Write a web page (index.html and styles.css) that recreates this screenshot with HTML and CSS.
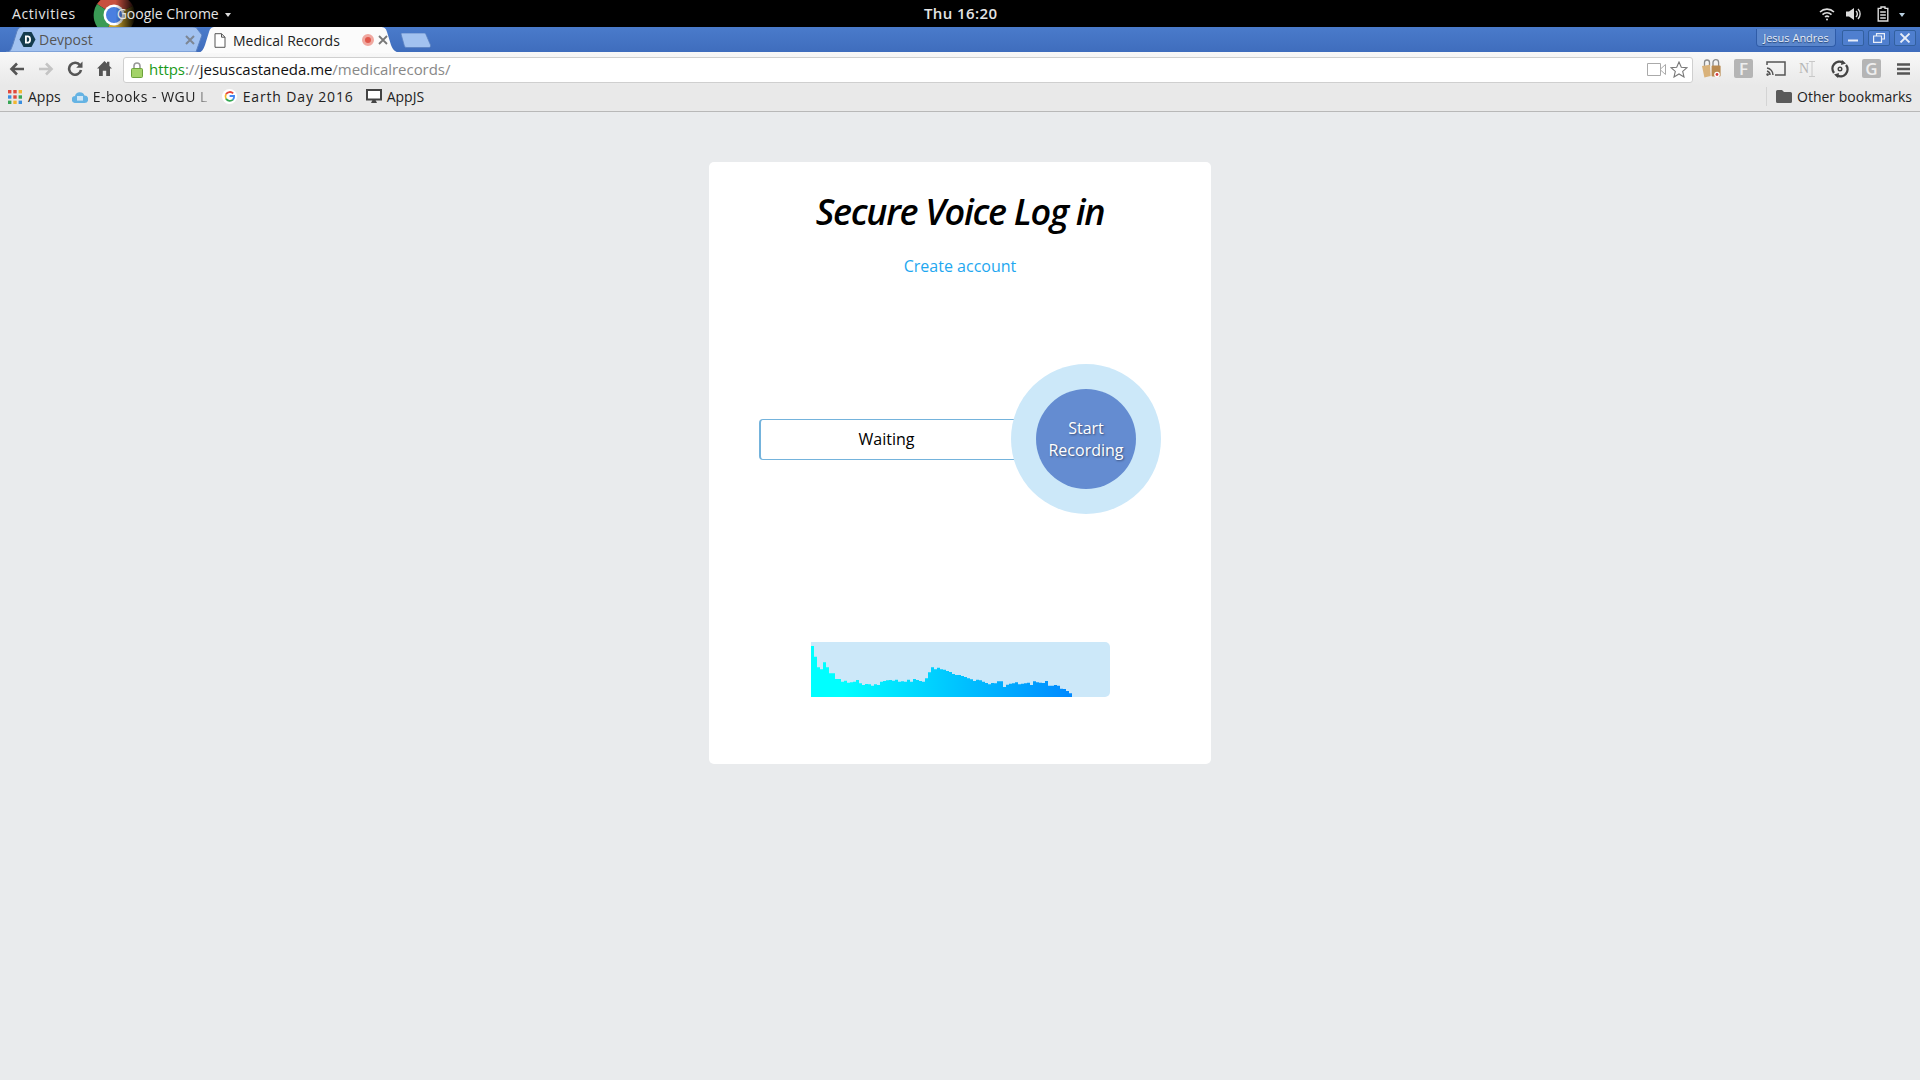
FILE: index.html
```html
<!DOCTYPE html>
<html lang="en">
    <head>
        <title>Medical Records</title>
        <meta charset="utf-8" />
        <link rel="stylesheet" href="styles.css">
    </head>
    <body>
        <div id="topbar">
            <span class="activities">Activities</span>
            <div class="appmenu">
                <svg class="chrome" width="50" height="27" viewBox="0 0 50 27">
                    <defs>
                        <linearGradient id="fade" x1="0" x2="1" y1="0" y2="0">
                            <stop offset="0.45" stop-color="#000" stop-opacity="0" />
                            <stop offset="0.85" stop-color="#000" />
                        </linearGradient>
                    </defs>
                    <path d="M21 15 L4 4 A21 21 0 0 1 40 6 Z" fill="#c8503f" />
                    <path d="M21 15 L4 4 A21 21 0 0 0 12 34 Z" fill="#3a9a55" />
                    <path d="M21 15 L40 6 A21 21 0 0 1 12 34 Z" fill="#c9a22a" />
                    <circle cx="21" cy="15" r="10.5" fill="#fff" />
                    <circle cx="21" cy="15" r="8" fill="#4a7fe0" />
                    <rect width="50" height="27" fill="url(#fade)" />
                </svg>
                <span class="appname">Google Chrome</span>
                <span class="caret"></span>
            </div>
            <span class="clock">Thu 16:20</span>
            <div class="status">
                <svg width="16" height="14" viewBox="0 0 16 14" fill="none" stroke="#ddd" stroke-width="1.6">
                    <path d="M1 5 A10 10 0 0 1 15 5" />
                    <path d="M3.5 7.6 A6.5 6.5 0 0 1 12.5 7.6" />
                    <path d="M6 10 A3 3 0 0 1 10 10" />
                    <circle cx="8" cy="12.4" r="1" fill="#ddd" stroke="none" />
                </svg>
                <svg class="speaker" width="16" height="14" viewBox="0 0 16 14" fill="#ddd">
                    <path d="M0 4.5 H3 L8 1 V13 L3 9.5 H0 Z" />
                    <path d="M10 4 A4 4 0 0 1 10 10 M12 2 A7 7 0 0 1 12 12" fill="none" stroke="#ddd" stroke-width="1.4" />
                </svg>
                <svg class="battery" width="12" height="16" viewBox="0 0 12 16" fill="none" stroke="#ddd" stroke-width="1.4">
                    <path d="M4 1 H8 V2.4 H10.8 V15 H1.2 V2.4 H4 Z" />
                    <path d="M3.2 6 H8.8 M3.2 9 H8.8 M3.2 12 H8.8" />
                </svg>
                <span class="caret small"></span>
            </div>
        </div>
        <div id="tabstrip">
            <div class="tab idle">
                <svg class="tabshape" width="196" height="25" viewBox="0 0 196 25">
                    <path d="M0 25 C5 25 5 22 7 17 L11 4 C12 1 14 0 16 0 H187 C190 0 191 1 192 3 L196 8 L190 25 Z" fill="#a2c2f0" stroke="#5c82c0" />
                </svg>
                <svg class="favicon" width="17" height="17" viewBox="0 0 17 17">
                    <path d="M4.5 1 H12.5 L16.5 8.5 L12.5 16 H4.5 L.5 8.5 Z" fill="#143b4d" />
                    <path d="M6 4.5 H9 C11.4 4.5 12 6.8 12 8.5 C12 10.2 11.4 12.5 9 12.5 H6 Z M7.8 6.2 V10.8 H8.8 C9.9 10.8 10.2 9.6 10.2 8.5 C10.2 7.4 9.9 6.2 8.8 6.2 Z" fill="#fff" fill-rule="evenodd" />
                </svg>
                <span class="tabtitle">Devpost</span>
                <svg class="tabclose" width="10" height="10" viewBox="0 0 10 10">
                    <path d="M1 1 L9 9 M9 1 L1 9" stroke="#7d8694" stroke-width="2" />
                </svg>
            </div>
            <div class="tab active">
                <svg class="tabshape" width="202" height="26" viewBox="0 0 202 26">
                    <path d="M0 26 C4 25 5 23 7 18 L11 5 C12 1 14 0 17 0 H182 C186 0 188 1 189 5 L193 18 C195 23 197 25 202 26 Z" fill="#fbfbfb" />
                </svg>
                <svg class="favicon page" width="12" height="15" viewBox="0 0 12 15">
                    <path d="M1 .7 H7.5 L11 4.2 V14.3 H1 Z M7.5 .7 V4.2 H11" fill="#fff" stroke="#555" stroke-width="1" />
                </svg>
                <span class="tabtitle">Medical Records</span>
                <span class="recdot"></span>
                <svg class="tabclose" width="10" height="10" viewBox="0 0 10 10">
                    <path d="M1 1 L9 9 M9 1 L1 9" stroke="#777" stroke-width="1.8" />
                </svg>
            </div>
            <svg class="newtab" width="31" height="15" viewBox="0 0 31 15">
                <path d="M1 1 C1 .5 1.5 0 2 0 H24 C25 0 25.6 .5 26 1.5 L30.5 12 C31 13.5 30 14.5 29 14.5 H7 C5.5 14.5 4.8 14 4.4 13 Z" fill="#a2c2f0" stroke="#5c82c0" stroke-width=".8" />
            </svg>
            <div class="winbuttons">
                <span class="profile">Jesus Andres</span>
                <span class="winbtn">
                    <svg width="12" height="10" viewBox="0 0 12 10"><path d="M1 7.5 H11" stroke="#e8eef8" stroke-width="2" /></svg>
                </span>
                <span class="winbtn">
                    <svg width="12" height="10" viewBox="0 0 12 10" fill="none" stroke="#e8eef8" stroke-width="1.2"><path d="M3.5 2.5 V.6 H11.4 V6 H8.5 M.6 3 H8.5 V9.4 H.6 Z" /></svg>
                </span>
                <span class="winbtn">
                    <svg width="12" height="10" viewBox="0 0 12 10"><path d="M1.5 .5 L10.5 9.5 M10.5 .5 L1.5 9.5" stroke="#e8eef8" stroke-width="1.8" /></svg>
                </span>
            </div>
        </div>
        <div id="toolbar">
            <svg class="navicon back" width="16" height="14" viewBox="0 0 16 14">
                <path d="M15 7 H3 M8 1.5 L2.5 7 L8 12.5" fill="none" stroke="#555" stroke-width="2.6" />
            </svg>
            <svg class="navicon forward" width="16" height="14" viewBox="0 0 16 14">
                <path d="M1 7 H13 M8 1.5 L13.5 7 L8 12.5" fill="none" stroke="#c4c4c4" stroke-width="2.6" />
            </svg>
            <svg class="navicon reload" width="16" height="15" viewBox="0 0 16 15">
                <path d="M13 4.2 A6 6 0 1 0 14 9" fill="none" stroke="#555" stroke-width="2.6" />
                <path d="M15.5 .5 V6.8 H9.2 Z" fill="#555" />
            </svg>
            <svg class="navicon home" width="15" height="15" viewBox="0 0 15 15">
                <path d="M7.5 0 L10 2.5 V.8 H12.4 V5 L15 7.5 H13 V15 H9.2 V9.8 H5.8 V15 H2 V7.5 H0 Z" fill="#555" />
            </svg>
            <div class="omnibox">
                <svg class="lock" width="12" height="16" viewBox="0 0 12 16">
                    <path d="M3 7 V4 A3 3 0 0 1 9 4 V7" fill="none" stroke="#999" stroke-width="1.6" />
                    <rect x=".5" y="6.5" width="11" height="9" rx="1" fill="#a3d368" stroke="#6da23c" />
                </svg>
                <span class="url"><span class="scheme">https</span><span class="dim">://</span>jesuscastaneda.me<span class="dim">/medicalrecords/</span></span>
                <svg class="camera" width="19" height="13" viewBox="0 0 19 13" fill="none" stroke="#aaa" stroke-width="1">
                    <path d="M.5 .5 H13.5 V12.5 H.5 Z M13.5 6 L18.5 1.5 V11.5 L13.5 7" />
                </svg>
                <svg class="star" width="18" height="17" viewBox="0 0 18 17">
                    <path d="M9 1 L11.3 6.2 L17 6.7 L12.7 10.4 L14 16 L9 13 L4 16 L5.3 10.4 L1 6.7 L6.7 6.2 Z" fill="#fff" stroke="#777" stroke-width="1.1" />
                </svg>
            </div>
            <div class="extensions">
                <svg width="19" height="19" viewBox="0 0 19 19">
                    <path d="M2.5 7 V3.5 A2.5 2.5 0 0 1 7.5 3.5 V7 M11 7 V3.5 A2.8 2.8 0 0 1 16.6 3.5 V7" fill="none" stroke="#8a8a8a" stroke-width="1.3" />
                    <path d="M0 7 L8 5.8 L8.6 17 L2.4 18.4 Z" fill="#d9b27a" />
                    <rect x="9.6" y="6.6" width="9" height="10.8" rx="1" fill="#b98a50" />
                    <circle cx="15" cy="15.5" r="2.8" fill="#fff" />
                    <circle cx="15" cy="15.5" r="1.4" fill="#d43c3c" />
                </svg>
                <span class="extbox">F</span>
                <svg width="20" height="16" viewBox="0 0 20 16" fill="none" stroke="#555" stroke-width="1.5">
                    <path d="M1 4 V1 H19 V14 H9" />
                    <path d="M1 7 A7 7 0 0 1 7 14 M1 10 A4 4 0 0 1 4 14" />
                    <circle cx="1.6" cy="13.6" r="1.3" fill="#555" stroke="none" />
                </svg>
                <span class="extnote">N<svg width="6" height="16" viewBox="0 0 6 16" fill="none" stroke="#c8c8c8"><path d="M0 .5 H6 M3 .5 V15.5 M0 15.5 H6" /></svg></span>
                <svg width="18" height="18" viewBox="0 0 18 18" fill="none" stroke="#444" stroke-width="2.4">
                    <path d="M3 13 A7 7 0 0 1 12 2.6" />
                    <path d="M15 5 A7 7 0 0 1 6 15.4" />
                    <circle cx="9" cy="9" r="1.8" stroke-width="1.4" />
                    <path d="M11 0 L15 3.4 L10 5 Z M7 18 L3 14.6 L8 13 Z" fill="#444" stroke="none" />
                </svg>
                <span class="extbox">G</span>
                <svg class="menuicon" width="13" height="12" viewBox="0 0 13 12">
                    <path d="M0 1.5 H13 M0 6 H13 M0 10.5 H13" stroke="#555" stroke-width="2.4" />
                </svg>
            </div>
        </div>
        <div id="bookmarks">
            <svg class="appsicon" width="14" height="14" viewBox="0 0 14 14">
                <rect width="3.4" height="3.4" fill="#e0483c" /><rect x="5.3" width="3.4" height="3.4" fill="#e0483c" /><rect x="10.6" width="3.4" height="3.4" fill="#f2b632" />
                <rect y="5.3" width="3.4" height="3.4" fill="#3a8fe0" /><rect x="5.3" y="5.3" width="3.4" height="3.4" fill="#e0483c" /><rect x="10.6" y="5.3" width="3.4" height="3.4" fill="#38a655" />
                <rect y="10.6" width="3.4" height="3.4" fill="#38a655" /><rect x="5.3" y="10.6" width="3.4" height="3.4" fill="#f2b632" /><rect x="10.6" y="10.6" width="3.4" height="3.4" fill="#3a8fe0" />
            </svg>
            <span class="mark apps">Apps</span>
            <svg class="cloud" width="16" height="12" viewBox="0 0 16 12">
                <path d="M3.5 12 A3.5 3.5 0 0 1 3 5 A5 5 0 0 1 12.5 4.6 A3.7 3.7 0 0 1 12.5 12 Z" fill="#65b3e3" />
                <rect x="5" y="5" width="6" height="4.6" fill="#cfe6f6" />
            </svg>
            <span class="mark ebooks">E-books - WGU L</span>
            <svg class="gicon" width="15" height="15" viewBox="0 0 15 15">
                <circle cx="7.5" cy="7.5" r="7.5" fill="#fff" />
                <path d="M11.2 4.3 A4.7 4.7 0 0 0 4 5.2" fill="none" stroke="#e5453a" stroke-width="1.8" />
                <path d="M4 5.2 A4.7 4.7 0 0 0 4 9.8" fill="none" stroke="#f4b72b" stroke-width="1.8" />
                <path d="M4 9.8 A4.7 4.7 0 0 0 11 10.6" fill="none" stroke="#35a853" stroke-width="1.8" />
                <path d="M11 10.6 A4.7 4.7 0 0 0 12.1 7 H7.6" fill="none" stroke="#4385f4" stroke-width="1.8" />
            </svg>
            <span class="mark earth">Earth Day 2016</span>
            <svg class="monitor" width="16" height="15" viewBox="0 0 16 15">
                <path d="M1 1 H15 V10.5 H1 Z" fill="#fff" stroke="#444" stroke-width="2" />
                <path d="M5 14 H11 L9.5 11 H6.5 Z" fill="#444" />
            </svg>
            <span class="mark">AppJS</span>
            <div class="otherbm">
                <svg width="16" height="13" viewBox="0 0 16 13">
                    <path d="M0 1.5 A1.5 1.5 0 0 1 1.5 0 H6 L8 2 H14.5 A1.5 1.5 0 0 1 16 3.5 V11.5 A1.5 1.5 0 0 1 14.5 13 H1.5 A1.5 1.5 0 0 1 0 11.5 Z" fill="#5a5a5a" />
                </svg>
                <span class="mark">Other bookmarks</span>
            </div>
        </div>
        <div id="page">
            <div class="card">
                <h1>Secure Voice Log in</h1>
                <a class="create" href="#">Create account</a>
                <div class="recorder">
                    <div class="status-box">Waiting</div>
                    <div class="ring">
                        <button class="record" type="button">Start Recording</button>
                    </div>
                </div>
                <div class="wave">
                    <svg width="300" height="55" viewBox="0 0 300 55">
                        <defs>
                            <linearGradient id="wavefill" x1="0" x2="262" y1="0" y2="0" gradientUnits="userSpaceOnUse">
                                <stop offset="0.12" stop-color="#00ffff" />
                                <stop offset="1" stop-color="#0088ff" />
                            </linearGradient>
                        </defs>
                        <path fill="url(#wavefill)" d="M0 55 V4 h3 V14.7 h3 V25.3 h3 V27.3 h3 V20.3 h3 V25.3 h3 V31.3 h6 V37 h6 V39.7 h3 V38.7 h3 V40.7 h3 V40.3 h3 V39.7 h3 V38 h3 V41.3 h3 V43 h3 V42 h3 V42.3 h3 V43.7 h3 V42.3 h3 V43 h3 V39.7 h3 V39 h3 V38.3 h3 V38 h3 V38.7 h3 V37.7 h3 V39.7 h3 V39.3 h3 V39.7 h3 V37.7 h3 V39.7 h3 V37 h3 V38 h3 V39 h3 V39.7 h3 V36.3 h3 V30.3 h3 V25.3 h3 V27.3 h3 V25.7 h3 V27.3 h3 V27.7 h3 V29 h3 V30 h3 V32 h3 V33 h6 V34 h3 V35 h3 V36.3 h3 V37.3 h3 V39 h3 V37.7 h3 V38.3 h3 V39.7 h3 V41 h3 V42.3 h3 V41 h3 V41.3 h3 V39.3 h6 V45 h3 V42.7 h3 V41.7 h3 V41.3 h3 V40.3 h3 V42.3 h3 V41.7 h3 V41.3 h3 V40.7 h3 V43 h3 V39.3 h3 V40.3 h3 V40.7 h3 V41 h3 V39 h3 V43.7 h6 V43 h3 V43.7 h3 V46.7 h3 V47 h3 V49 h3 V51.3 h3 V55 Z" />
                    </svg>
                </div>
            </div>
        </div>
    </body>
</html>
```

FILE: styles.css
```css
html, body {
    margin: 0px;
    padding: 0px;
    height: 100%;
    overflow: hidden;
    background: #e9ebed;
    font-family: "Open Sans", sans-serif;
}
svg {
    display: block;
    flex: none;
}

/* gnome bar */
#topbar {
    position: relative;
    display: flex;
    align-items: center;
    height: 27px;
    background: #000;
    color: #e4e4e4;
    font-size: 14px;
}
.activities {
    margin-left: 12px;
    letter-spacing: 0.6px;
}
.appmenu {
    position: relative;
    display: flex;
    align-items: center;
    margin-left: 41px;
}
.chrome {
    position: absolute;
    left: -24px;
    top: -4px;
}
.appname {
    position: relative;
}
.caret {
    margin: 3px 0px 0px 6px;
    border-left: 3.5px solid transparent;
    border-right: 3.5px solid transparent;
    border-top: 4px solid #ddd;
    position: relative;
}
.caret.small {
    margin: 3px 0px 0px -2px;
    border-top-color: #b9cfe0;
}
.clock {
    position: absolute;
    left: 924px;
    top: 3px;
    font-size: 15px;
    letter-spacing: 0.4px;
    font-weight: 600;
}
.status {
    display: flex;
    align-items: center;
    gap: 12px;
    margin-left: auto;
    margin-right: 15px;
}
.speaker {
    margin-left: -1px;
}
.battery {
    margin-left: 3px;
}

/* tabs */
#tabstrip {
    display: flex;
    height: 25px;
    padding-left: 6px;
    background: linear-gradient(#4a7bcb, #3f6dbd);
    font-size: 14px;
    color: #222;
}
.tab {
    position: relative;
    display: flex;
    align-items: center;
    height: 25px;
}
.tabshape {
    position: absolute;
    left: 0px;
    top: 0px;
}
.tab.idle {
    width: 196px;
    color: #555;
}
.tab.active {
    width: 202px;
    height: 26px;
    margin-left: -4px;
}
.favicon, .tabtitle, .tabclose, .recdot {
    position: relative;
}
.tab.idle .favicon {
    margin-left: 13px;
}
.tab.idle .tabtitle {
    margin-left: 3px;
}
.tab.idle .tabclose {
    margin-left: auto;
    margin-right: 7px;
}
.favicon.page {
    margin-left: 16px;
}
.tab.active .tabtitle {
    margin-left: 7px;
}
.recdot {
    margin-left: auto;
    width: 6px;
    height: 6px;
    border-radius: 50%;
    background: #e0584c;
    border: 3px solid #f0a8a0;
    box-sizing: content-box;
}
.tab.active .tabclose {
    margin: 0px 12px 0px 4px;
}
.newtab {
    margin: 6px 0px 0px 0px;
}
.winbuttons {
    display: flex;
    margin-left: auto;
    margin-right: 4px;
    gap: 4px;
}
.profile {
    width: 78px;
    height: 17px;
    margin: 2px 2px 0px 0px;
    border: 1px solid #2f5ca8;
    border-top: none;
    border-radius: 0px 0px 4px 4px;
    background: #5a86cc;
    color: #e8eef8;
    font-size: 11px;
    line-height: 17px;
    text-align: center;
    text-shadow: 0px 1px 1px #22406f;
}
.winbtn {
    display: flex;
    align-items: center;
    justify-content: center;
    width: 20px;
    height: 14px;
    margin-top: 3px;
    background: #4f7fcf;
    border: 1px solid #32609f;
    border-radius: 2px;
}

/* toolbar */
#toolbar {
    display: flex;
    align-items: center;
    height: 33px;
    background: linear-gradient(#f8f8f8, #e9e9e9);
}
.back {
    margin-left: 9px;
}
.forward {
    margin-left: 13px;
}
.reload {
    margin-left: 13px;
}
.home {
    margin-left: 14px;
}
.omnibox {
    display: flex;
    align-items: center;
    box-sizing: border-box;
    width: 1570px;
    height: 26px;
    margin-left: 11px;
    margin-top: 2px;
    background: #fff;
    border: 1px solid #cfcfcf;
    border-radius: 3px;
}
.lock {
    margin-left: 7px;
}
.url {
    margin-left: 6px;
    padding-bottom: 2px;
    font-size: 15px;
    letter-spacing: -0.05px;
    color: #111;
}
.scheme {
    color: #1a9a1a;
}
.dim {
    color: #888;
}
.camera {
    margin-left: auto;
}
.star {
    margin: 0px 4px 0px 4px;
}
.extensions {
    display: flex;
    align-items: center;
    margin-left: 9px;
    gap: 13px;
}
.extbox {
    width: 19px;
    height: 19px;
    border-radius: 2px;
    background: #b5b5b5;
    color: #eee;
    font-size: 17px;
    font-weight: 600;
    line-height: 19px;
    text-align: center;
}
.extnote {
    display: flex;
    align-items: center;
    width: 19px;
    color: #b5b5b5;
    font-family: "Liberation Serif", serif;
    font-size: 14px;
}
.menuicon {
    margin-left: 3px;
}

/* bookmarks */
#bookmarks {
    display: flex;
    align-items: center;
    box-sizing: border-box;
    height: 27px;
    padding: 0px 0px 3px 8px;
    background: #e9e9e9;
    border-bottom: 1px solid #b8b8b8;
    font-size: 14px;
    color: #222;
}
.mark {
    white-space: nowrap;
}
.apps {
    margin-left: 6px;
}
.cloud {
    margin-left: 11px;
}
.ebooks {
    width: 114px;
    margin-left: 5px;
    letter-spacing: 0.5px;
    -webkit-mask-image: linear-gradient(to right, #000 88%, rgba(0, 0, 0, 0.25));
}
.gicon {
    margin-left: 15px;
}
.earth {
    margin-left: 6px;
    letter-spacing: 0.85px;
}
.monitor {
    margin-left: 12px;
    margin-right: 5px;
}
.otherbm {
    display: flex;
    align-items: center;
    gap: 5px;
    margin-left: auto;
    margin-right: 8px;
    padding-left: 9px;
    border-left: 1px solid #d4d4d4;
}

/* page */
#page {
    display: flex;
    justify-content: center;
    padding-top: 50px;
}
.card {
    display: flex;
    flex-direction: column;
    align-items: center;
    box-sizing: border-box;
    width: 502px;
    height: 602px;
    padding-top: 27px;
    background: #fff;
    border-radius: 5px;
}
h1 {
    margin: 0px;
    font-size: 36px;
    font-style: italic;
    font-weight: 600;
    letter-spacing: -1.3px;
    line-height: 46px;
    color: #000;
}
.create {
    margin-top: 20px;
    font-size: 16px;
    line-height: 22px;
    color: #1ea7f0;
    text-decoration: none;
}
.recorder {
    display: flex;
    align-items: center;
    width: 402px;
    margin-top: 87px;
}
.status-box {
    box-sizing: border-box;
    width: 256px;
    height: 41px;
    margin-right: -4px;
    border: 1px solid #74b3dc;
    border-left-width: 2px;
    border-right: none;
    border-radius: 4px 0px 0px 4px;
    font-size: 16px;
    line-height: 38px;
    padding-right: 3px;
    text-align: center;
    color: #000;
}
.ring {
    position: relative;
    display: flex;
    align-items: center;
    justify-content: center;
    width: 150px;
    height: 150px;
    border-radius: 50%;
    background: #cce8f9;
}
.record {
    width: 100px;
    height: 100px;
    padding: 0px 8px;
    border: none;
    border-radius: 50%;
    background: #648cd1;
    color: #fff;
    font-family: "Open Sans", sans-serif;
    font-size: 16px;
    line-height: 22px;
    text-shadow: 1px 1px 2px #3b4f78;
}
.wave {
    width: 299px;
    height: 55px;
    margin-top: 128px;
    margin-left: 1px;
    background: #cce8f9;
    border-radius: 0px 5px 5px 0px;
    overflow: hidden;
}
```
